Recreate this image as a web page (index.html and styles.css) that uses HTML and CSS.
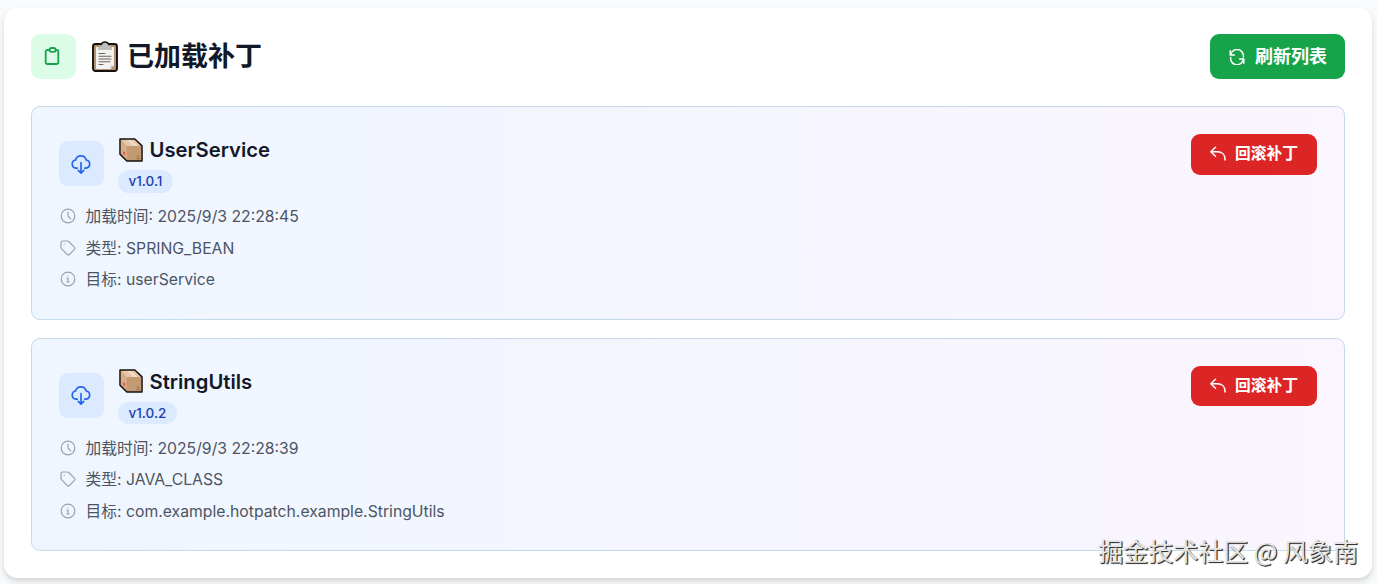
FILE: index.html
```html
<!DOCTYPE html>
<html lang="zh-CN">
<head>
    <meta charset="UTF-8">
    <meta name="viewport" content="width=device-width, initial-scale=1.0">
    <title>已加载补丁</title>
    <link rel="stylesheet" href="styles.css">
</head>
<body>
    <svg class="sprite" aria-hidden="true">
        <symbol id="icon-cloud" viewBox="0 0 24 24">
            <path d="M8 16.500H6.500a4.500 4.500 0 0 1-.4-8.900A6 6 0 0 1 17.700 7.600a4.500 4.500 0 0 1-.2 8.900H16M12 10.500V22M9 19l3 3 3-3"/>
        </symbol>
        <symbol id="icon-clock" viewBox="0 0 16 16">
            <circle cx="8" cy="8" r="6.8"/>
            <path d="M8 4v4l2.7 2.8"/>
        </symbol>
        <symbol id="icon-tag" viewBox="0 0 16 16">
            <path d="M1 2.6A1.6 1.6 0 0 1 2.6 1h5c.4 0 .8.2 1.1.5l5.8 5.8a1.5 1.5 0 0 1 0 2.1l-5.1 5.1a1.5 1.5 0 0 1-2.1 0L1.5 8.7A1.5 1.5 0 0 1 1 7.6z"/>
            <path d="M4.2 4.2h.01"/>
        </symbol>
        <symbol id="icon-info" viewBox="0 0 16 16">
            <circle cx="8" cy="8" r="6.8"/>
            <path d="M7 7.3h1v3.6M7 10.9h2M8 4.9h.01"/>
        </symbol>
        <symbol id="icon-undo" viewBox="0 0 18 18">
            <path d="M6.500 2.300 1.800 6.800l4.700 4.500M1.800 6.800h6.500c4.600 0 7.700 2.700 7.700 7.200v1"/>
        </symbol>
        <symbol id="icon-box" viewBox="0 0 25 25">
            <path d="M1 1h15.5L24 8.2V24H8.2L1 16.8z" fill="#c49a72"/>
            <path d="M1 1h15.5L24 8.2l-16 .3z" fill="#e6c8a9"/>
            <path d="M1 1l7 7.5V24L1 16.8z" fill="#d6ad88"/>
            <path d="M7 1l8.5 7.4h4L11 1z" fill="#f0dcc8"/>
            <path d="M4.500 13.500l1.800 1.500v3L4.500 16.500z" fill="#e04444"/>
            <path d="M19 19h1.500M18.500 21.500h3" stroke="#8a6242" stroke-width=".9"/>
            <path d="M1 1h15.5L24 8.2V24H8.2L1 16.8z" fill="none" stroke="#15110e" stroke-width="1.5" stroke-linejoin="round"/>
        </symbol>
    </svg>

    <div class="panel">
        <div class="panel-header">
            <div class="panel-title">
                <div class="icon-box green">
                    <svg class="icon-clipboard" viewBox="0 0 16 20">
                        <path d="M5 4H3.5A1.8 1.8 0 0 0 1.700 5.800v10.400A1.8 1.8 0 0 0 3.500 18h9a1.8 1.8 0 0 0 1.800-1.800V5.800A1.8 1.8 0 0 0 12.500 4H12"/>
                        <path d="M7.500 2h2.200a1.900 1.900 0 0 1 0 3.800H7.500a1.900 1.900 0 0 1 0-3.800z"/>
                    </svg>
                </div>
                <svg class="emoji-clipboard" viewBox="0 0 26 31">
                    <rect x="1" y="3" width="24" height="27" rx="2.5" fill="#b39372" stroke="#14110f" stroke-width="1.9"/>
                    <path d="M4 6h18v18.500L18.500 28H4z" fill="#f3f2f1"/>
                    <path d="M22 24.500 18.500 28v-3.500z" fill="#c9c6c4"/>
                    <path d="M7 12.500h6M7 15.300h12M7 18h12M7 20.700h11M7 23.500h4" stroke="#686563" stroke-width="1.100"/>
                    <path d="M6 9V6.500L9.500 4C9.800 2 11 1 13 1s3.200 1 3.500 3L20 6.500V9z" fill="#bebebd"/>
                    <path d="M9.200 3.500C9.800 1.800 11 1 13 1s3.200.8 3.800 2.500" fill="none" stroke="#14110f" stroke-width="1.500"/>
                </svg>
                <h2>已加载补丁</h2>
            </div>
            <button class="btn btn-refresh">
                <svg viewBox="0 0 16 16">
                    <path d="M1.200 1.800v4.200h4.200M1.700 5.700A6.300 6.300 0 0 1 14.300 8M14.800 14.200V10h-4.200M14.300 10.300A6.300 6.300 0 0 1 1.700 8.500"/>
                </svg>
                <span>刷新列表</span>
            </button>
        </div>

        <div class="patch-list">
            <div class="patch">
                <div class="patch-info">
                    <div class="patch-head">
                        <div class="icon-box blue"><svg class="icon-cloud"><use href="#icon-cloud"/></svg></div>
                        <div class="patch-name">
                            <h3><svg class="emoji-box"><use href="#icon-box"/></svg>UserService</h3>
                            <span class="version">v1.0.1</span>
                        </div>
                    </div>
                    <div class="details">
                        <p><svg><use href="#icon-clock"/></svg>加载时间: 2025/9/3 22:28:45</p>
                        <p><svg><use href="#icon-tag"/></svg>类型: SPRING_BEAN</p>
                        <p><svg><use href="#icon-info"/></svg>目标: userService</p>
                    </div>
                </div>
                <button class="btn btn-rollback"><svg><use href="#icon-undo"/></svg><span>回滚补丁</span></button>
            </div>

            <div class="patch">
                <div class="patch-info">
                    <div class="patch-head">
                        <div class="icon-box blue"><svg class="icon-cloud"><use href="#icon-cloud"/></svg></div>
                        <div class="patch-name">
                            <h3><svg class="emoji-box"><use href="#icon-box"/></svg>StringUtils</h3>
                            <span class="version">v1.0.2</span>
                        </div>
                    </div>
                    <div class="details">
                        <p><svg><use href="#icon-clock"/></svg>加载时间: 2025/9/3 22:28:39</p>
                        <p><svg><use href="#icon-tag"/></svg>类型: JAVA_CLASS</p>
                        <p><svg><use href="#icon-info"/></svg>目标: com.example.hotpatch.example.StringUtils</p>
                    </div>
                </div>
                <button class="btn btn-rollback"><svg><use href="#icon-undo"/></svg><span>回滚补丁</span></button>
            </div>
        </div>
    </div>
    <div class="watermark">掘金技术社区 @ 风象南</div>
</body>
</html>
```
FILE: styles.css
```css
* {
    box-sizing: border-box;
    margin: 0;
    padding: 0;
}

body {
    height: 584px;
    padding: 8px 5px 6px 4px;
    overflow: hidden;
    position: relative;
    background: #f9fafb;
    color: #111827;
    font-family: Inter, "Noto Sans CJK SC", sans-serif;
}

svg {
    display: block;
    flex: none;
    fill: none;
    stroke: currentColor;
    stroke-linecap: round;
    stroke-linejoin: round;
}

.sprite {
    position: absolute;
    width: 0;
    height: 0;
}

.panel {
    height: 570px;
    padding: 26px 27px;
    background: #fff;
    border-radius: 13.5px;
    box-shadow: 0 4px 7px rgba(0,0,0,0.1), 0 2px 4px rgba(0,0,0,0.06);
}

.panel-header {
    display: flex;
    justify-content: space-between;
    align-items: center;
    height: 45px;
    margin-bottom: 27px;
}

.panel-title {
    display: flex;
    align-items: center;
}

.icon-box {
    display: flex;
    justify-content: center;
    align-items: center;
    width: 45px;
    height: 45px;
    border-radius: 9px;
}

.green {
    background: #dcfce7;
    color: #16a34a;
}

.blue {
    background: #dbeafe;
    color: #2563eb;
}

.icon-clipboard {
    width: 16px;
    height: 20px;
    margin: 0 3px 2px 0;
    stroke-width: 1.8;
}

.emoji-clipboard {
    width: 26px;
    height: 31px;
    margin: 0 9px 0 16px;
    stroke: none;
}

.panel-title h2 {
    font-size: 27px;
    line-height: 36px;
    font-weight: 700;
}

.btn {
    display: flex;
    align-items: center;
    border: none;
    border-radius: 9px;
    color: #fff;
    font-family: inherit;
    font-weight: 600;
}

.btn span {
    padding-bottom: 3px;
}

.btn-refresh {
    width: 135px;
    height: 45px;
    padding-left: 19px;
    gap: 10px;
    background: #16a34a;
    font-size: 18px;
}

.btn-refresh svg {
    width: 16px;
    height: 16px;
    stroke-width: 1.5;
}

.patch-list {
    display: flex;
    flex-direction: column;
    gap: 18px;
}

.patch {
    display: flex;
    justify-content: space-between;
    align-items: flex-start;
    height: 213.5px;
    padding: 27px;
    border: 1px solid #c4daeb;
    border-radius: 9px;
    background: linear-gradient(to right, #eff6ff, #faf5ff);
}

.patch-head {
    display: flex;
    align-items: center;
    gap: 13.5px;
    height: 59px;
    margin-bottom: 11.6px;
}

.icon-cloud {
    width: 22px;
    height: 22px;
    margin-right: 1px;
    stroke-width: 1.8;
}

.patch-name h3 {
    display: flex;
    align-items: center;
    gap: 7px;
    height: 31.5px;
    padding-bottom: 1px;
    font-size: 20.25px;
    font-weight: 600;
}

.emoji-box {
    width: 24px;
    height: 24px;
    margin-left: 1px;
    stroke: none;
}

.version {
    display: block;
    width: fit-content;
    height: 22.5px;
    margin-top: 4px;
    padding: 0 11px;
    border-radius: 12px;
    background: #dbeafe;
    color: #1e40af;
    font-size: 13.5px;
    font-weight: 500;
    line-height: 22.5px;
}

.details {
    display: grid;
    gap: 9px;
}

.details p {
    display: flex;
    align-items: center;
    gap: 8.5px;
    height: 22.5px;
    color: #4b5563;
    font-size: 15.75px;
}

.details svg {
    width: 18px;
    height: 19px;
    padding: 2px 1px 1px;
    color: #9ca3af;
    stroke-width: 1.2;
}

.btn-rollback {
    width: 126px;
    height: 40.5px;
    padding-left: 18px;
    gap: 8px;
    background: #dc2626;
    font-size: 15.75px;
}

.btn-rollback svg {
    width: 18px;
    height: 18px;
    stroke-width: 1.5;
}

.watermark {
    position: absolute;
    right: 19px;
    bottom: 16px;
    color: #e5e5e5;
    font: 25px/36px "Noto Sans CJK SC", sans-serif;
    text-shadow: 1px 1px 1px #333, 1px 1px 0 #555;
    white-space: nowrap;
}
```
